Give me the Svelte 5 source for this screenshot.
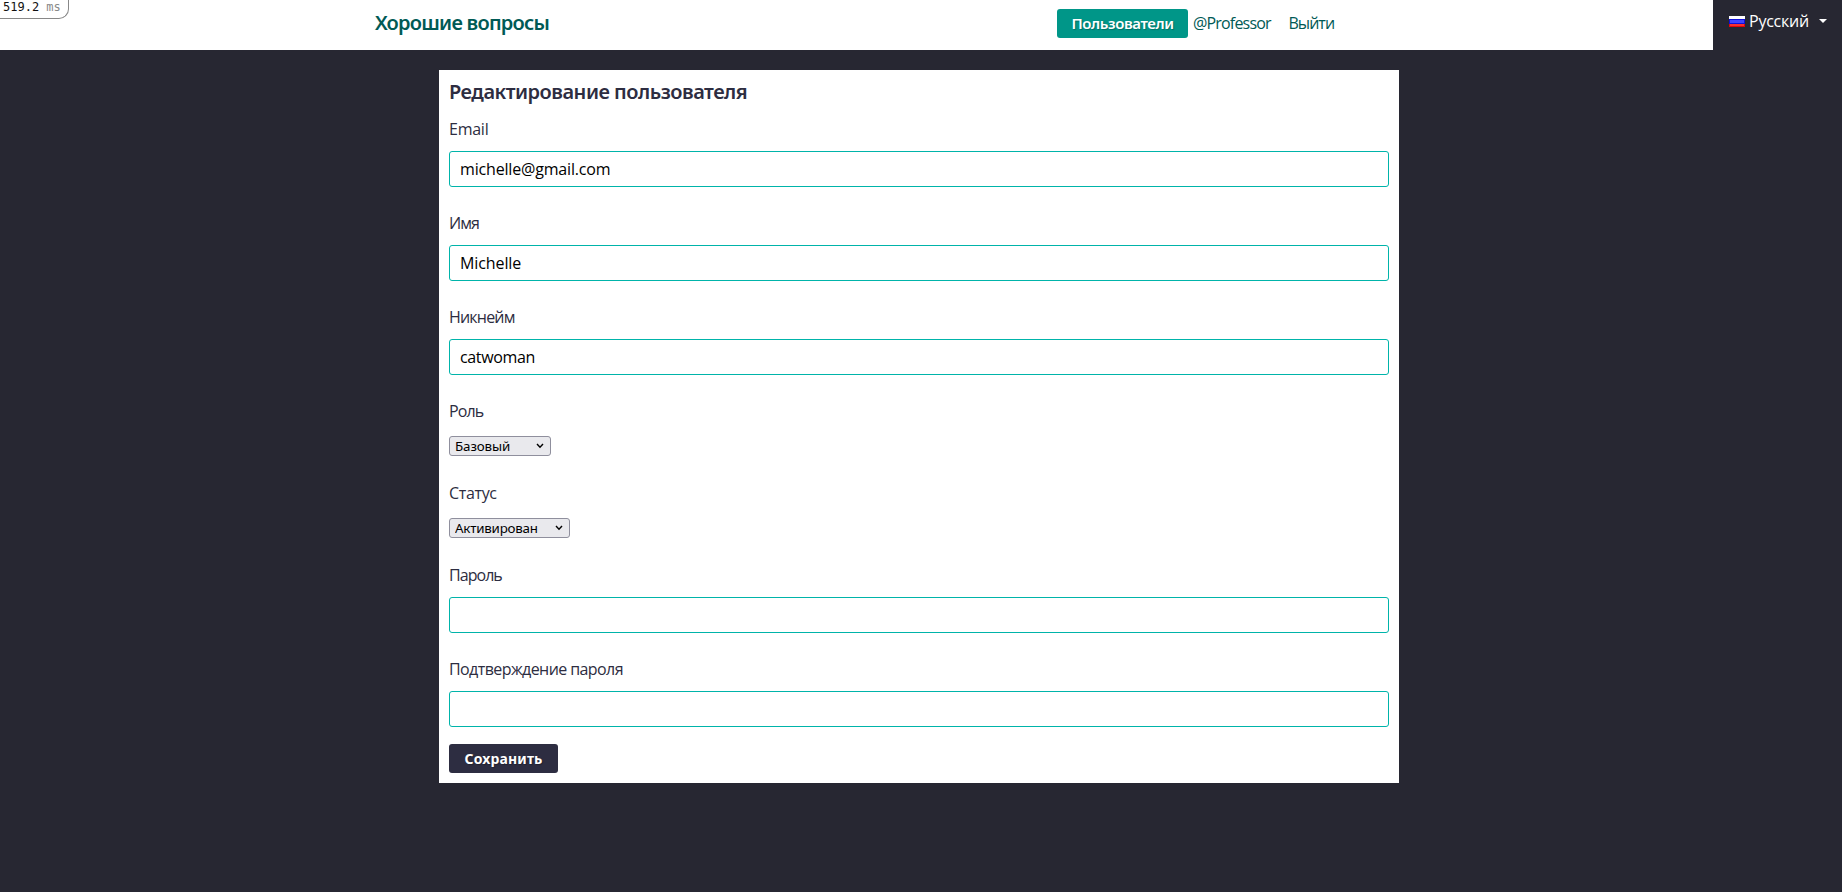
<script>
  const inputs = [
    { id: 'email', label: 'Email', value: 'michelle@gmail.com', track: -0.25, valueTrack: -0.17 },
    { id: 'name', label: 'Имя', value: 'Michelle', track: -0.9, valueTrack: -0.1 },
    { id: 'nickname', label: 'Никнейм', value: 'catwoman', track: -0.8, valueTrack: -0.34 },
    { id: 'role', label: 'Роль', options: ['Базовый'], track: -0.9, valueTrack: -0.1, width: 102 },
    { id: 'status', label: 'Статус', options: ['Активирован'], track: -0.35, valueTrack: -0.2, width: 121 },
    { id: 'password', label: 'Пароль', value: '', type: 'password', track: -0.95 },
    { id: 'confirmation', label: 'Подтверждение пароля', value: '', type: 'password', track: -0.58 }
  ];
</script>

<div class="timer">519.2 <span>ms</span></div>
<header>
  <a class="brand" href="#home">Хорошие вопросы</a>
  <nav>
    <a class="users" href="#users">Пользователи</a>
    <a class="profile" href="#profile">@Professor</a>
    <a class="logout" href="#logout">Выйти</a>
  </nav>
  <button class="lang">
    <svg class="flag" width="16" height="11" viewBox="0 0 16 11">
      <path fill="#fff" d="M0 0h16v3H0z" />
      <path fill="#1010d8" d="M0 3h16v5H0z" />
      <path fill="#e00808" d="M0 8h16v3H0z" />
      <path fill="#4242ff" d="M1 4h14v3H1z" />
      <path fill="#fa3030" d="M1 8h14v2H1z" />
    </svg>
    <span>Русский</span>
    <svg class="caret" width="8" height="4" viewBox="0 0 8 4"><path fill="#fff" d="M0 0h8L4 4z" /></svg>
  </button>
</header>

<main>
  <h1>Редактирование пользователя</h1>
  <form>
    {#each inputs as f}
      <label for={f.id} style:letter-spacing="{f.track}px">{f.label}</label>
      {#if f.options}
        <div class="pick" style:width="{f.width}px">
          <select id={f.id} style:letter-spacing="{f.valueTrack}px">
            {#each f.options as o}<option>{o}</option>{/each}
          </select>
          <svg width="8" height="6" viewBox="0 0 8 6"><path d="M1 1l3 3.3L7 1" fill="none" stroke="#000" stroke-width="1.4" /></svg>
        </div>
      {:else}
        <input id={f.id} type={f.type ?? 'text'} value={f.value} style:letter-spacing="{f.valueTrack ?? 0}px" />
      {/if}
    {/each}
    <button class="save" type="button">Сохранить</button>
  </form>
</main>

<style>
  :global(body) { background: #272732; font-family: "Open Sans", "Noto Sans", sans-serif; }
  * { box-sizing: border-box; }
  a { text-decoration: none; color: #005a55; }
  .timer {
    position: absolute; left: 0; top: 0; width: 69px; height: 19px; padding-left: 3px;
    border: 1px solid #888; border-width: 0 1px 1px 0; border-radius: 0 0 10px 0;
    background: #fff; color: #111; font: 12px/14px "DejaVu Sans Mono", monospace; white-space: nowrap;
  }
  .timer span { color: #888; }
  header { height: 50px; padding-left: 375px; display: grid; grid-template-columns: 682px 1fr 129px; background: #fff; }
  .brand { font: 600 20px/46px "Noto Sans", sans-serif; letter-spacing: -0.76px; }
  nav { display: flex; align-items: flex-start; line-height: 46px; font-size: 16px; }
  .users {
    width: 131px; height: 29px; margin: 9px 5px 0 0; border-radius: 3px; background: #009688; color: #fff;
    text-align: center; font: 600 15px/29px "Noto Sans", sans-serif; letter-spacing: -0.4px;
    text-shadow: 1px 1px 1px rgba(0, 0, 0, 0.25);
  }
  .profile { width: 95.5px; letter-spacing: -0.82px; }
  .logout { letter-spacing: -0.98px; }
  .lang {
    display: flex; align-items: flex-start; padding: 0 0 0 16px; border: 0; background: #272732; color: #fff;
    font: 16px/42px "Open Sans", sans-serif; letter-spacing: -0.25px;
  }
  .flag { margin: 16px 4px 0 0; }
  .caret { margin: 19px 0 0 10px; }
  main { width: 960px; height: 713px; margin: 20px 0 0 439px; padding: 10px; background: #fff; color: #2d2d41; }
  h1 { margin: 0 0 13px; font: 600 20px/24px "Noto Sans", sans-serif; letter-spacing: -0.5px; }
  form { display: flex; flex-direction: column; align-items: flex-start; }
  label { margin-bottom: 10px; font-size: 16px; line-height: 24px; }
  input {
    width: 940px; height: 36px; margin: 0 0 24px; padding: 0 10px 1px; border: 1px solid #00b4aa; border-radius: 3px;
    background: #fff; color: #000; font: 16px "Open Sans", sans-serif; outline: 0;
  }
  .pick { display: grid; align-items: center; height: 20px; margin: 3px 0 25px; }
  .pick > * { grid-area: 1 / 1; }
  select {
    width: 100%; height: 20px; padding: 0 20px 0 5px; border: 1px solid #8f8f9d; border-radius: 3px; appearance: none;
    background: #e9e9ed; color: #000; font: 13.33px/18px "Noto Sans", sans-serif;
  }
  .pick svg { justify-self: end; margin-right: 7px; pointer-events: none; }
  .save {
    width: 109px; height: 29px; margin-top: -7px; padding: 0 0 1px; border: 0; border-radius: 3px; background: #2d2d41;
    color: #fff; font: 700 14px "Noto Sans", sans-serif; letter-spacing: 0.15px; text-shadow: 1px 1px 1px #0004;
  }
</style>
